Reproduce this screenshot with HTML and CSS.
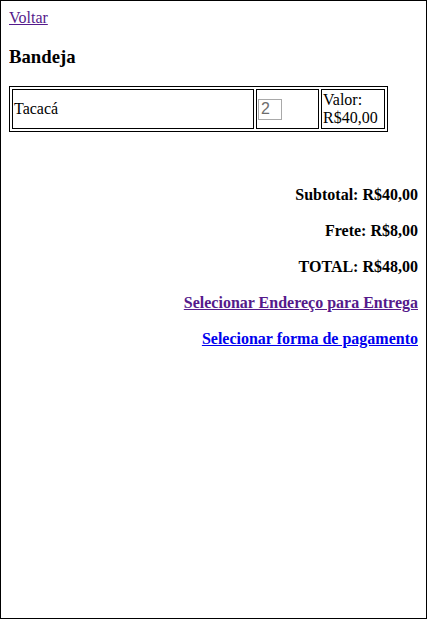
FILE: index.html
```html
<!DOCTYPE html>
<html lang="pt-BR">
<head>
<meta charset="utf-8">
<title>Bandeja</title>
<link rel="stylesheet" href="styles.css">
</head>
<body>
<a class="link visited" href="#">Voltar</a>
<h3 class="title">Bandeja</h3>
<table class="tray">
  <tr>
    <td class="c-name">Tacacá</td>
    <td class="c-qty"><input class="qty" type="text" value="2" disabled></td>
    <td class="c-val">Valor: R$40,00</td>
  </tr>
</table>
<div class="summary">
  <p class="line">Subtotal: R$40,00</p>
  <p class="line">Frete: R$8,00</p>
  <p class="line">TOTAL: R$48,00</p>
  <p class="line"><a class="link visited" href="#">Selecionar Endereço para Entrega</a></p>
  <p class="line"><a class="link" href="#">Selecionar forma de pagamento</a></p>
</div>
</body>
</html>
```
FILE: styles.css
```css
html {
  height: 100vh;
  box-sizing: border-box;
  border: 1px solid #000;
  background: #fff;
}
body {
  margin: 8px;
  font-family: "Liberation Serif", "Times New Roman", serif;
  font-size: 16px;
  color: #000;
}
.link { color: #0000ee; text-decoration: underline; }
.link.visited { color: #551a8b; }
.title {
  font-size: 18.72px;
  font-weight: bold;
  margin: 18.72px 0;
}
.tray {
  border: 1px solid #000;
  border-spacing: 2px;
  width: 379px;
}
.tray td {
  border: 1px solid #000;
  padding: 1px;
  font-size: 16px;
}
.c-name { width: 238px; }
.c-qty { width: 59px; }
.c-val { width: 60px; }
.qty {
  box-sizing: border-box;
  width: 24px;
  height: 21px;
  border: 1px solid #a9a9a9;
  padding: 1px 2px;
  font-family: "Liberation Sans", Arial, sans-serif;
  font-size: 16px;
  color: #6d6d6d;
  background: #fff;
  margin: 0;
}
.summary {
  text-align: right;
  padding-top: 36px;
}
.line {
  font-weight: bold;
  margin: 18px 0;
}
```
